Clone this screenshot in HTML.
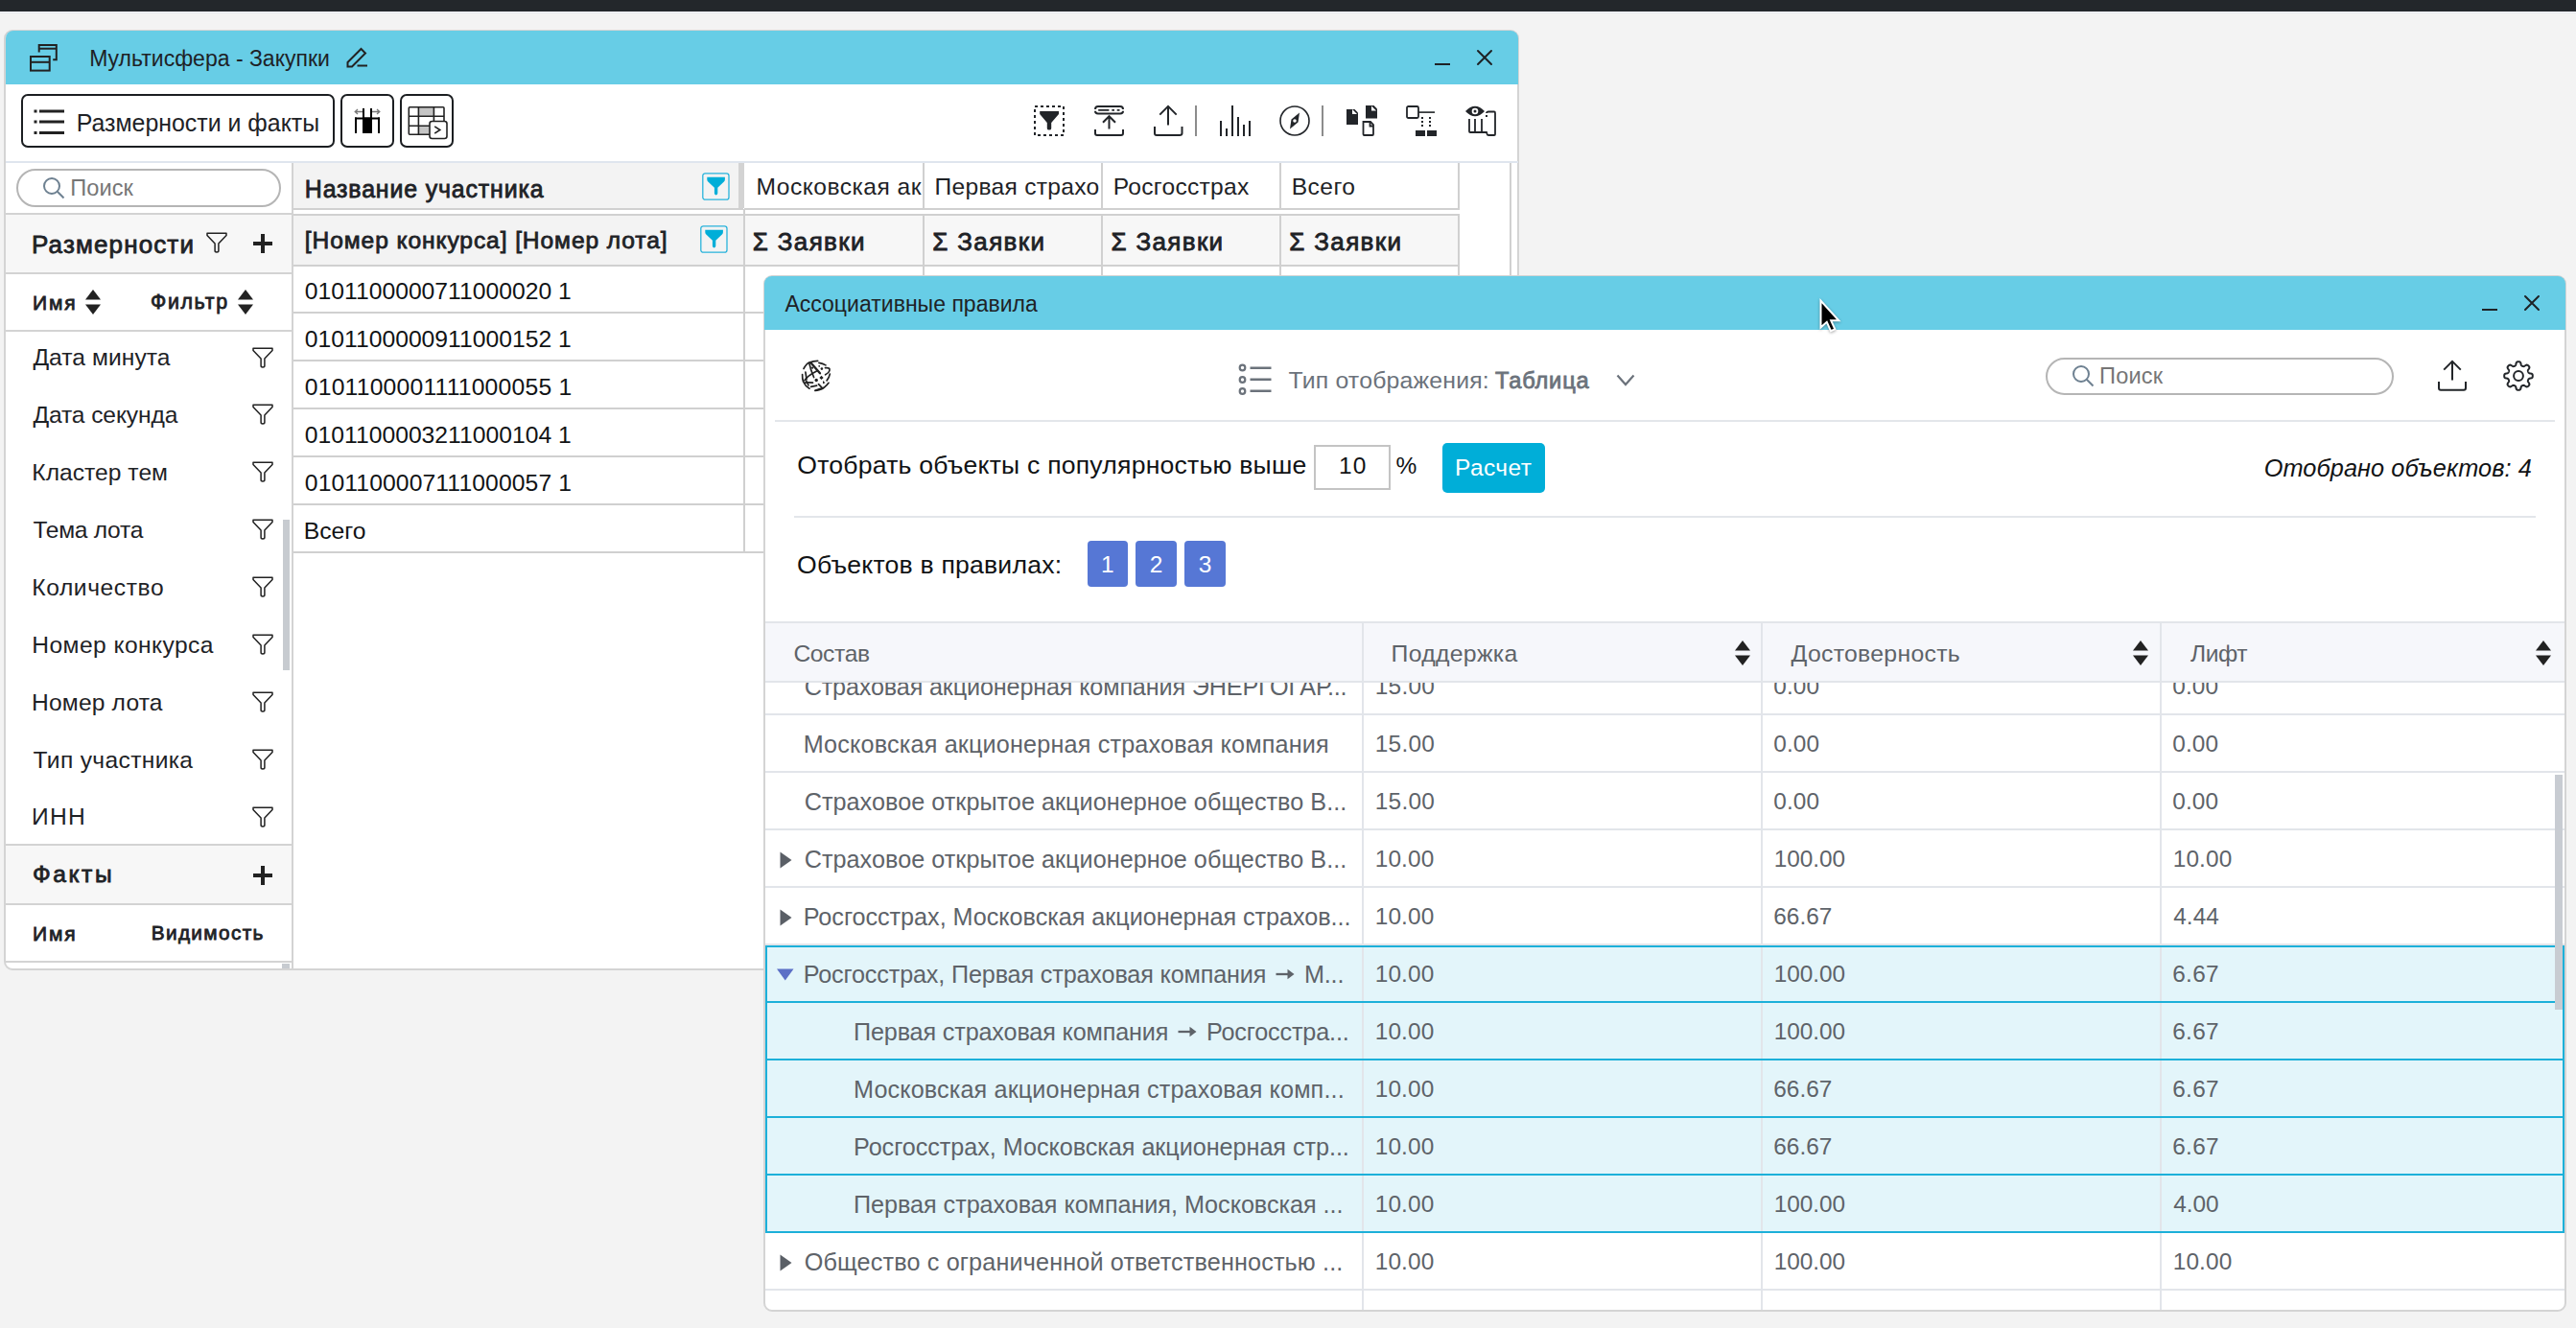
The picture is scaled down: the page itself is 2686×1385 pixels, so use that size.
<!DOCTYPE html><html><head><meta charset="utf-8"><style>
html,body{margin:0;padding:0;width:2686px;height:1385px;overflow:hidden;background:#f3f3f3;}
body{position:relative;font-family:"Liberation Sans",sans-serif;}
.t{position:absolute;white-space:nowrap;line-height:1;}
.r{position:absolute;box-sizing:border-box;}
svg.r{overflow:visible;}
.ar{display:inline-block;transform:translateY(-3px) scale(1.4,1.25);}
</style></head><body>
<div class="r" style="left:0.0px;top:0.0px;width:2686.0px;height:12.0px;background:#23272b;"></div>
<div class="r" style="left:0.0px;top:12.0px;width:2686.0px;height:1.0px;background:#f6f7fb;"></div>
<div class="r" style="left:0.0px;top:13.0px;width:2686.0px;height:1.0px;background:#e7e9ed;"></div>
<div class="r" style="left:4.0px;top:31.0px;width:1580.0px;height:981.0px;background:#ffffff;border:2px solid #d4d4d4;border-radius:9px;"></div>
<div class="r" style="left:6.0px;top:32.0px;width:1577.0px;height:56.0px;background:#67cde6;border-radius:8px 8px 0 0;"></div>
<svg class="r" style="left:30px;top:45px;" width="32" height="32" viewBox="0 0 32 32"><g fill="none" stroke="#222" stroke-width="2"><path d="M10.7 9.6 V2 H28.8 V17.3 H25.2"/><path d="M10.7 5.7 H28.8"/><rect x="2" y="14" width="19.7" height="14.6"/><path d="M2 19.8 H21.7"/></g></svg>
<div class="t" style="left:93.2px;top:49.7px;font-size:23px;font-weight:400;font-style:normal;color:#1e2226;letter-spacing:0.01px;">Мультисфера - Закупки</div>
<svg class="r" style="left:360px;top:49px;" width="26" height="24" viewBox="0 0 26 24"><g fill="none" stroke="#222" stroke-width="2"><path d="M2.5 20.5 V16 L16.5 2 L21 6.5 L7 20.5 Z"/><path d="M12.5 19.5 H23"/></g></svg>
<div class="r" style="left:1496.0px;top:66.0px;width:16.0px;height:2.0px;background:#1e2226;"></div>
<svg class="r" style="left:1540px;top:52px;" width="16" height="16" viewBox="0 0 16 16"><g stroke="#1e2226" stroke-width="2" stroke-linecap="round"><path d="M1 1 L15 15 M15 1 L1 15"/></g></svg>
<div class="r" style="left:6.0px;top:168.0px;width:1577.0px;height:2.0px;background:#dfe5ee;"></div>
<div class="r" style="left:22.0px;top:98.0px;width:327.0px;height:56.0px;background:#fff;border:2px solid #1b1e21;border-radius:7px;"></div>
<svg class="r" style="left:35px;top:114px;" width="34" height="28" viewBox="0 0 34 28"><g fill="#222"><rect x="0.5" y="0.5" width="3" height="3"/><rect x="6" y="0.5" width="26" height="3"/><rect x="0.5" y="11.5" width="3" height="3"/><rect x="6" y="11.5" width="26" height="3"/><rect x="0.5" y="23" width="3" height="3"/><rect x="6" y="23" width="26" height="3"/></g></svg>
<div class="t" style="left:79.7px;top:116.0px;font-size:24.9px;font-weight:400;font-style:normal;color:#1e2226;letter-spacing:0.00px;">Размерности и факты</div>
<div class="r" style="left:355.0px;top:98.0px;width:56.0px;height:56.0px;background:#fff;border:2px solid #1b1e21;border-radius:7px;"></div>
<svg class="r" style="left:369px;top:112px;" width="28" height="28" viewBox="0 0 28 28"><g fill="#000"><rect x="1" y="10.5" width="26" height="2"/><rect x="1" y="10.5" width="2" height="16.5"/><rect x="25" y="10.5" width="2" height="16.5"/><rect x="9" y="10.5" width="10" height="16.5"/><rect x="9" y="1" width="2" height="10"/><rect x="17" y="1" width="2" height="10"/></g><g fill="none" stroke="#777" stroke-width="1.3"><path d="M9 4.5 H1.5 M4 2 L1.2 4.5 L4 7 M19 4.5 H26.5 M24 2 L26.8 4.5 L24 7"/></g></svg>
<div class="r" style="left:417.0px;top:98.0px;width:56.0px;height:56.0px;background:#fff;border:2px solid #1b1e21;border-radius:7px;"></div>
<svg class="r" style="left:425px;top:110px;" width="44" height="38" viewBox="0 0 44 38"><g fill="#c4c4c4"><rect x="11.4" y="1.8" width="16" height="9.5"/><rect x="11.4" y="21.2" width="11.6" height="9"/></g><g fill="none" stroke="#222" stroke-width="1.6"><rect x="1.3" y="1.8" width="36.7" height="28.4" rx="1"/><path d="M1.3 11.3 H38 M1.3 21.2 H23 M11.4 1.8 V30.2 M27.4 1.8 V16.5"/></g><rect x="23" y="16.5" width="18" height="18" rx="2.5" fill="#fff" stroke="#222" stroke-width="1.6"/><path d="M28.2 21.8 L33.8 25.5 L28.2 29.2" fill="none" stroke="#222" stroke-width="1.6"/></svg>
<svg class="r" style="left:1078px;top:110px;" width="32" height="32" viewBox="0 0 32 32"><rect x="1" y="1" width="30" height="30" fill="none" stroke="#222529" stroke-width="2" stroke-dasharray="3 3"/><path d="M6.2 6 H26 V9 L18.2 18 V24 Q18.2 25.6 16 25.6 Q13.8 25.6 13.8 24 V18 L6.2 9 Z" fill="#222529"/></svg>
<svg class="r" style="left:1141px;top:110px;" width="31" height="32" viewBox="0 0 31 32"><g fill="none" stroke="#222529" stroke-width="2"><path d="M1 4 Q1 1 4 1 H27 Q30 1 30 4"/><path d="M1 5.8 Q1 8.6 4 8.6 H27 Q30 8.6 30 5.8"/><path d="M4.2 4.8 H15.4 M18.3 4.8 H21 M23.7 4.8 H26.5" stroke-width="1.7"/><path d="M15.5 24.5 V11.5 M9 17.7 L15.5 11.2 L22 17.7"/><path d="M1 25 V29 Q1 31 3 31 H28 Q30 31 30 29 V25"/></g></svg>
<svg class="r" style="left:1203px;top:110px;" width="31" height="32" viewBox="0 0 31 32"><g fill="none" stroke="#222529" stroke-width="2"><path d="M15 20.6 V1.5 M6.3 9.6 L15 0.9 L23.7 9.6"/><path d="M1 22 V29 Q1 31 3 31 H27 Q29.5 31 29.5 29 V22"/></g></svg>
<div class="r" style="left:1246.2px;top:110.0px;width:1.8px;height:32.0px;background:#8c8c8c;"></div>
<svg class="r" style="left:1272px;top:110px;" width="32" height="32" viewBox="0 0 32 32"><g fill="#222529"><rect x="0" y="16" width="2" height="16"/><rect x="6" y="24" width="2" height="8"/><rect x="12" y="0" width="2" height="32"/><rect x="18" y="12" width="2" height="20"/><rect x="24" y="20" width="2" height="12"/><rect x="30" y="16" width="2" height="16"/></g></svg>
<svg class="r" style="left:1334px;top:110px;" width="32" height="32" viewBox="0 0 32 32"><circle cx="16" cy="16" r="15" fill="none" stroke="#222529" stroke-width="1.6"/><path d="M21 7.5 L19.5 17.5 L11 24.5 L12.5 14.5 Z" fill="#222529"/><circle cx="16" cy="16" r="1.8" fill="#fff"/></svg>
<div class="r" style="left:1378.0px;top:110.0px;width:1.8px;height:32.0px;background:#8c8c8c;"></div>
<svg class="r" style="left:1404px;top:110px;" width="33" height="32" viewBox="0 0 33 32"><path d="M0 4 H8.5 L12 7.5 V20 H0 Z" fill="#222529"/><path d="M6 4 V9 H11" fill="#fff"/><path d="M20 0 H28.5 L32 3.5 V13.5 H20 Z" fill="#222529"/><path d="M26 0.5 V5.5 H31" fill="#fff"/><path d="M17.5 17 H25 L28 20 V30 Q28 31 27 31 H18.5 Q17.5 31 17.5 30 Z" fill="none" stroke="#222529" stroke-width="1.8"/><path d="M24.5 17 V21.5 H28" fill="none" stroke="#222529" stroke-width="1.8"/></svg>
<svg class="r" style="left:1466px;top:110px;" width="33" height="32" viewBox="0 0 33 32"><rect x="1" y="1" width="12" height="12" rx="1.5" fill="none" stroke="#222529" stroke-width="1.8"/><rect x="13" y="6.3" width="17" height="1.6" fill="#222529"/><g fill="#222529"><rect x="16" y="12" width="2" height="2"/><rect x="16" y="16" width="2" height="2"/><rect x="16" y="20" width="2" height="2"/><rect x="24" y="12" width="2" height="2"/><rect x="24" y="16" width="2" height="2"/><rect x="24" y="20" width="2" height="2"/><rect x="10" y="26" width="10" height="6"/><rect x="22" y="26" width="10" height="6"/></g></svg>
<svg class="r" style="left:1528px;top:110px;" width="33" height="32" viewBox="0 0 33 32"><path d="M0 6 Q10 -4.5 20 6 Q10 16.5 0 6 Z" fill="#222529"/><circle cx="10" cy="6" r="3.3" fill="#fff"/><circle cx="10" cy="6" r="1.5" fill="#222529"/><g fill="none" stroke="#222529" stroke-width="1.8"><path d="M22 8 Q22 6.5 24 6.5 H30 Q31 6.5 31 8 V30 Q31 31 30 31 H24 Q22.5 31 22.5 29.5 L22 28 H5 Q4 28 4 27 V14"/><path d="M10 14 V28 M17 14 V28"/></g><rect x="21" y="10" width="2" height="2" fill="#222529"/></svg>
<div class="r" style="left:304.0px;top:170.0px;width:2.0px;height:840.0px;background:#d3d3d3;"></div>
<div class="r" style="left:16.5px;top:176.0px;width:276.5px;height:39.5px;background:#fff;border:2px solid #b5b5b5;border-radius:20px;"></div>
<svg class="r" style="left:44px;top:184px;" width="24" height="24" viewBox="0 0 24 24"><g fill="none" stroke="#6e8191" stroke-width="2"><circle cx="10" cy="10" r="8"/><path d="M15.8 15.8 L22.5 22.5"/></g></svg>
<div class="t" style="left:73.3px;top:185.0px;font-size:23.6px;font-weight:400;font-style:normal;color:#767676;letter-spacing:0.05px;">Поиск</div>
<div class="r" style="left:6.0px;top:221.5px;width:298.0px;height:2.0px;background:#d3d3d3;"></div>
<div class="r" style="left:6.0px;top:223.5px;width:298.0px;height:60.5px;background:#f7f7f7;"></div>
<div class="t" style="left:33.0px;top:241.6px;font-size:26px;font-weight:400;-webkit-text-stroke:0.8px #1e2226;font-style:normal;color:#1e2226;letter-spacing:1.13px;">Размерности</div>
<svg class="r" style="left:214.5px;top:242px;" width="22" height="22" viewBox="0 0 22 22"><path d="M1 1.2 H21 V3.4 L12.9 12 V19.6 Q12.9 21.1 11 21.1 Q9.1 21.1 9.1 19.6 V12 L1 3.4 Z" fill="none" stroke="#222" stroke-width="1.5" stroke-linejoin="round"/></svg>
<svg class="r" style="left:264px;top:244px;" width="20" height="20" viewBox="0 0 20 20"><g fill="#222"><rect x="8" y="0" width="4" height="20"/><rect x="0" y="8" width="20" height="4"/></g></svg>
<div class="r" style="left:6.0px;top:284.0px;width:298.0px;height:2.0px;background:#d3d3d3;"></div>
<div class="t" style="left:34.0px;top:305.2px;font-size:21px;font-weight:400;-webkit-text-stroke:0.8px #1e2226;font-style:normal;color:#1e2226;letter-spacing:1.80px;">Имя</div>
<div class="t" style="left:157.0px;top:304.9px;font-size:21.4px;font-weight:400;-webkit-text-stroke:0.8px #1e2226;font-style:normal;color:#1e2226;letter-spacing:1.64px;">Фильтр</div>
<svg class="r" style="left:89px;top:302px;" width="16" height="26" viewBox="0 0 16 26"><g fill="#222"><path d="M8 0 L16 10.5 H0 Z"/><path d="M0 15.5 H16 L8 26 Z"/></g></svg>
<svg class="r" style="left:248px;top:302px;" width="16" height="26" viewBox="0 0 16 26"><g fill="#222"><path d="M8 0 L16 10.5 H0 Z"/><path d="M0 15.5 H16 L8 26 Z"/></g></svg>
<div class="r" style="left:6.0px;top:344.0px;width:298.0px;height:2.0px;background:#d3d3d3;"></div>
<div class="t" style="left:34.4px;top:361.2px;font-size:24.6px;font-weight:400;font-style:normal;color:#1e2226;letter-spacing:0.06px;">Дата минута</div>
<svg class="r" style="left:263px;top:361.5px;" width="22" height="22" viewBox="0 0 22 22"><path d="M1 1.2 H21 V3.4 L12.9 12 V19.6 Q12.9 21.1 11 21.1 Q9.1 21.1 9.1 19.6 V12 L1 3.4 Z" fill="none" stroke="#222" stroke-width="1.5" stroke-linejoin="round"/></svg>
<div class="t" style="left:34.4px;top:421.1px;font-size:24.6px;font-weight:400;font-style:normal;color:#1e2226;letter-spacing:-0.11px;">Дата секунда</div>
<svg class="r" style="left:263px;top:421.4px;" width="22" height="22" viewBox="0 0 22 22"><path d="M1 1.2 H21 V3.4 L12.9 12 V19.6 Q12.9 21.1 11 21.1 Q9.1 21.1 9.1 19.6 V12 L1 3.4 Z" fill="none" stroke="#222" stroke-width="1.5" stroke-linejoin="round"/></svg>
<div class="t" style="left:33.3px;top:481.0px;font-size:24.6px;font-weight:400;font-style:normal;color:#1e2226;letter-spacing:0.03px;">Кластер тем</div>
<svg class="r" style="left:263px;top:481.3px;" width="22" height="22" viewBox="0 0 22 22"><path d="M1 1.2 H21 V3.4 L12.9 12 V19.6 Q12.9 21.1 11 21.1 Q9.1 21.1 9.1 19.6 V12 L1 3.4 Z" fill="none" stroke="#222" stroke-width="1.5" stroke-linejoin="round"/></svg>
<div class="t" style="left:34.4px;top:540.9px;font-size:24.6px;font-weight:400;font-style:normal;color:#1e2226;letter-spacing:-0.28px;">Тема лота</div>
<svg class="r" style="left:263px;top:541.2px;" width="22" height="22" viewBox="0 0 22 22"><path d="M1 1.2 H21 V3.4 L12.9 12 V19.6 Q12.9 21.1 11 21.1 Q9.1 21.1 9.1 19.6 V12 L1 3.4 Z" fill="none" stroke="#222" stroke-width="1.5" stroke-linejoin="round"/></svg>
<div class="t" style="left:33.3px;top:600.8px;font-size:24.6px;font-weight:400;font-style:normal;color:#1e2226;letter-spacing:0.58px;">Количество</div>
<svg class="r" style="left:263px;top:601.1px;" width="22" height="22" viewBox="0 0 22 22"><path d="M1 1.2 H21 V3.4 L12.9 12 V19.6 Q12.9 21.1 11 21.1 Q9.1 21.1 9.1 19.6 V12 L1 3.4 Z" fill="none" stroke="#222" stroke-width="1.5" stroke-linejoin="round"/></svg>
<div class="t" style="left:33.3px;top:660.7px;font-size:24.6px;font-weight:400;font-style:normal;color:#1e2226;letter-spacing:0.43px;">Номер конкурса</div>
<svg class="r" style="left:263px;top:661.0px;" width="22" height="22" viewBox="0 0 22 22"><path d="M1 1.2 H21 V3.4 L12.9 12 V19.6 Q12.9 21.1 11 21.1 Q9.1 21.1 9.1 19.6 V12 L1 3.4 Z" fill="none" stroke="#222" stroke-width="1.5" stroke-linejoin="round"/></svg>
<div class="t" style="left:33.1px;top:720.6px;font-size:24.6px;font-weight:400;font-style:normal;color:#1e2226;letter-spacing:0.16px;">Номер лота</div>
<svg class="r" style="left:263px;top:720.9px;" width="22" height="22" viewBox="0 0 22 22"><path d="M1 1.2 H21 V3.4 L12.9 12 V19.6 Q12.9 21.1 11 21.1 Q9.1 21.1 9.1 19.6 V12 L1 3.4 Z" fill="none" stroke="#222" stroke-width="1.5" stroke-linejoin="round"/></svg>
<div class="t" style="left:34.6px;top:780.5px;font-size:24.6px;font-weight:400;font-style:normal;color:#1e2226;letter-spacing:0.33px;">Тип участника</div>
<svg class="r" style="left:263px;top:780.8px;" width="22" height="22" viewBox="0 0 22 22"><path d="M1 1.2 H21 V3.4 L12.9 12 V19.6 Q12.9 21.1 11 21.1 Q9.1 21.1 9.1 19.6 V12 L1 3.4 Z" fill="none" stroke="#222" stroke-width="1.5" stroke-linejoin="round"/></svg>
<div class="t" style="left:33.1px;top:840.4px;font-size:24.6px;font-weight:400;font-style:normal;color:#1e2226;letter-spacing:1.20px;">ИНН</div>
<svg class="r" style="left:263px;top:840.7px;" width="22" height="22" viewBox="0 0 22 22"><path d="M1 1.2 H21 V3.4 L12.9 12 V19.6 Q12.9 21.1 11 21.1 Q9.1 21.1 9.1 19.6 V12 L1 3.4 Z" fill="none" stroke="#222" stroke-width="1.5" stroke-linejoin="round"/></svg>
<div class="r" style="left:294.5px;top:542.0px;width:7.5px;height:157.0px;background:#c7cbd0;"></div>
<div class="r" style="left:6.0px;top:880.0px;width:298.0px;height:2.0px;background:#d3d3d3;"></div>
<div class="r" style="left:6.0px;top:882.0px;width:298.0px;height:60.0px;background:#f7f7f7;"></div>
<div class="t" style="left:34.0px;top:899.9px;font-size:24.6px;font-weight:400;-webkit-text-stroke:0.8px #1e2226;font-style:normal;color:#1e2226;letter-spacing:2.55px;">Факты</div>
<svg class="r" style="left:264px;top:902.5px;" width="20" height="20" viewBox="0 0 20 20"><g fill="#222"><rect x="8" y="0" width="4" height="20"/><rect x="0" y="8" width="20" height="4"/></g></svg>
<div class="r" style="left:6.0px;top:941.5px;width:298.0px;height:2.0px;background:#d3d3d3;"></div>
<div class="t" style="left:34.0px;top:963.2px;font-size:21px;font-weight:400;-webkit-text-stroke:0.8px #1e2226;font-style:normal;color:#1e2226;letter-spacing:1.80px;">Имя</div>
<div class="t" style="left:157.7px;top:963.4px;font-size:20.8px;font-weight:400;-webkit-text-stroke:0.8px #1e2226;font-style:normal;color:#1e2226;letter-spacing:1.35px;">Видимость</div>
<div class="r" style="left:6.0px;top:1002.0px;width:298.0px;height:2.0px;background:#d3d3d3;"></div>
<div class="r" style="left:294.0px;top:1005.0px;width:8.0px;height:5.0px;background:#c7cbd0;"></div>
<div class="r" style="left:306.0px;top:170.0px;width:466.0px;height:47.0px;background:#f3f3f3;"></div>
<div class="r" style="left:306.0px;top:217.0px;width:469.0px;height:2.0px;background:#d0d0d0;"></div>
<div class="r" style="left:770.0px;top:170.0px;width:6.0px;height:47.0px;background:#d3d3d3;"></div>
<div class="t" style="left:317.8px;top:184.5px;font-size:24.9px;font-weight:400;-webkit-text-stroke:0.8px #1e2226;font-style:normal;color:#1e2226;letter-spacing:0.86px;">Название участника</div>
<svg class="r" style="left:731.5px;top:179.5px;" width="29" height="29" viewBox="0 0 29 29"><rect x="0.8" y="0.8" width="27.2" height="27.4" rx="2.5" fill="none" stroke="#29b3db" stroke-width="1.3"/><path d="M5.3 4.8 H23.9 V7.3 Q23.9 8.6 22.9 9.6 L16.3 15.8 V21.6 Q16.3 23.4 14.6 23.4 Q12.9 23.4 12.9 21.6 V15.8 L6.3 9.6 Q5.3 8.6 5.3 7.3 Z" fill="#00aed8"/></svg>
<div class="r" style="left:306.0px;top:223.0px;width:469.0px;height:2.0px;background:#d0d0d0;"></div>
<div class="r" style="left:306.0px;top:225.0px;width:469.0px;height:50.5px;background:#f3f3f3;"></div>
<div class="r" style="left:306.0px;top:275.5px;width:469.0px;height:2.0px;background:#d0d0d0;"></div>
<div class="t" style="left:317.8px;top:239.2px;font-size:24.6px;font-weight:400;-webkit-text-stroke:0.8px #1e2226;font-style:normal;color:#1e2226;letter-spacing:0.90px;">[Номер конкурса] [Номер лота]</div>
<svg class="r" style="left:729.5px;top:234.5px;" width="29" height="29" viewBox="0 0 29 29"><rect x="0.8" y="0.8" width="27.2" height="27.4" rx="2.5" fill="none" stroke="#29b3db" stroke-width="1.3"/><path d="M5.3 4.8 H23.9 V7.3 Q23.9 8.6 22.9 9.6 L16.3 15.8 V21.6 Q16.3 23.4 14.6 23.4 Q12.9 23.4 12.9 21.6 V15.8 L6.3 9.6 Q5.3 8.6 5.3 7.3 Z" fill="#00aed8"/></svg>
<div class="r" style="left:775.5px;top:217.0px;width:746.5px;height:2.0px;background:#d0d0d0;"></div>
<div class="r" style="left:775.5px;top:223.0px;width:746.5px;height:2.0px;background:#d0d0d0;"></div>
<div class="r" style="left:775.5px;top:225.0px;width:746.5px;height:50.5px;background:#f7f7f7;"></div>
<div class="r" style="left:775.5px;top:275.5px;width:746.5px;height:2.0px;background:#d0d0d0;"></div>
<div class="t" style="left:788.6px;top:183.2px;font-size:24.6px;font-weight:400;font-style:normal;color:#1e2226;letter-spacing:0.48px;">Московская ак</div>
<div class="t" style="left:784.8px;top:238.5px;font-size:26px;font-weight:400;-webkit-text-stroke:0.8px #1e2226;font-style:normal;color:#1e2226;letter-spacing:1.34px;"><span style="font-weight:400">Σ</span> Заявки</div>
<div class="t" style="left:974.5px;top:183.2px;font-size:24.6px;font-weight:400;font-style:normal;color:#1e2226;letter-spacing:0.29px;">Первая страхо</div>
<div class="t" style="left:972.3px;top:238.5px;font-size:26px;font-weight:400;-webkit-text-stroke:0.8px #1e2226;font-style:normal;color:#1e2226;letter-spacing:1.34px;"><span style="font-weight:400">Σ</span> Заявки</div>
<div class="t" style="left:1160.8px;top:183.2px;font-size:24.6px;font-weight:400;font-style:normal;color:#1e2226;letter-spacing:0.25px;">Росгосстрах</div>
<div class="t" style="left:1158.5px;top:238.5px;font-size:26px;font-weight:400;-webkit-text-stroke:0.8px #1e2226;font-style:normal;color:#1e2226;letter-spacing:1.34px;"><span style="font-weight:400">Σ</span> Заявки</div>
<div class="t" style="left:1346.7px;top:183.2px;font-size:24.6px;font-weight:400;font-style:normal;color:#1e2226;letter-spacing:0.45px;">Всего</div>
<div class="t" style="left:1344.3px;top:238.5px;font-size:26px;font-weight:400;-webkit-text-stroke:0.8px #1e2226;font-style:normal;color:#1e2226;letter-spacing:1.34px;"><span style="font-weight:400">Σ</span> Заявки</div>
<div class="r" style="left:962.0px;top:170.0px;width:2.0px;height:47.0px;background:#d0d0d0;"></div>
<div class="r" style="left:962.0px;top:223.0px;width:2.0px;height:65.0px;background:#d0d0d0;"></div>
<div class="r" style="left:1148.2px;top:170.0px;width:2.0px;height:47.0px;background:#d0d0d0;"></div>
<div class="r" style="left:1148.2px;top:223.0px;width:2.0px;height:65.0px;background:#d0d0d0;"></div>
<div class="r" style="left:1334.0px;top:170.0px;width:2.0px;height:47.0px;background:#d0d0d0;"></div>
<div class="r" style="left:1334.0px;top:223.0px;width:2.0px;height:65.0px;background:#d0d0d0;"></div>
<div class="r" style="left:1520.0px;top:170.0px;width:2.0px;height:47.0px;background:#d0d0d0;"></div>
<div class="r" style="left:1520.0px;top:223.0px;width:2.0px;height:65.0px;background:#d0d0d0;"></div>
<div class="r" style="left:1574.0px;top:170.0px;width:2.0px;height:840.0px;background:#d0d0d0;"></div>
<div class="t" style="left:317.8px;top:292.1px;font-size:24.7px;font-weight:400;font-style:normal;color:#111315;letter-spacing:0.01px;">0101100000711000020 1</div>
<div class="r" style="left:306.0px;top:325.0px;width:491.0px;height:2.0px;background:#d0d0d0;"></div>
<div class="t" style="left:317.8px;top:342.0px;font-size:24.7px;font-weight:400;font-style:normal;color:#111315;letter-spacing:0.01px;">0101100000911000152 1</div>
<div class="r" style="left:306.0px;top:375.0px;width:491.0px;height:2.0px;background:#d0d0d0;"></div>
<div class="t" style="left:317.8px;top:391.9px;font-size:24.7px;font-weight:400;font-style:normal;color:#111315;letter-spacing:0.21px;">0101100001111000055 1</div>
<div class="r" style="left:306.0px;top:425.0px;width:491.0px;height:2.0px;background:#d0d0d0;"></div>
<div class="t" style="left:317.8px;top:441.8px;font-size:24.7px;font-weight:400;font-style:normal;color:#111315;letter-spacing:0.01px;">0101100003211000104 1</div>
<div class="r" style="left:306.0px;top:475.0px;width:491.0px;height:2.0px;background:#d0d0d0;"></div>
<div class="t" style="left:317.8px;top:491.7px;font-size:24.7px;font-weight:400;font-style:normal;color:#111315;letter-spacing:0.11px;">0101100007111000057 1</div>
<div class="r" style="left:306.0px;top:525.0px;width:491.0px;height:2.0px;background:#d0d0d0;"></div>
<div class="t" style="left:316.8px;top:541.6px;font-size:24.7px;font-weight:400;font-style:normal;color:#111315;letter-spacing:0.00px;">Всего</div>
<div class="r" style="left:306.0px;top:575.0px;width:491.0px;height:2.0px;background:#d0d0d0;"></div>
<div class="r" style="left:774.5px;top:218.0px;width:2.0px;height:358.0px;background:#d0d0d0;"></div>
<div class="r" style="left:796.0px;top:287.0px;width:1880.0px;height:1081.0px;background:#fff;border:2px solid #d4d4d4;border-radius:9px;"></div>
<div class="r" style="left:797.0px;top:288.0px;width:1878.0px;height:56.0px;background:#67cde6;border-radius:8px 8px 0 0;"></div>
<div class="t" style="left:818.4px;top:305.5px;font-size:23px;font-weight:400;font-style:normal;color:#1e2226;letter-spacing:0.02px;">Ассоциативные правила</div>
<div class="r" style="left:2588.0px;top:322.0px;width:16.0px;height:2.0px;background:#1e2226;"></div>
<svg class="r" style="left:2632px;top:308px;" width="16" height="16" viewBox="0 0 16 16"><g stroke="#1e2226" stroke-width="2" stroke-linecap="round"><path d="M1 1 L15 15 M15 1 L1 15"/></g></svg>
<svg class="r" style="left:836px;top:376px;" width="31" height="32" viewBox="0 0 31 32"><g fill="none" stroke="#222" stroke-width="1.7" stroke-linecap="round">
<path d="M2 8.5 Q5 3 8 2 Q12 0.3 16.7 0.3"/>
<path d="M17.9 2.4 Q22 3 25 4.9"/>
<path d="M24.5 7.7 Q28.5 7.3 29 9 Q29.5 12 24.6 14.8"/>
<path d="M29.3 14.1 Q28.5 18 26.1 20.9"/>
<path d="M28 23.3 Q24 29 18 30.8 Q16 31.4 14.1 31.4"/>
<path d="M0.6 14.5 Q0.5 19 1.5 22 Q3.5 26.5 8 29.2"/>
<path d="M7.7 2.4 Q9 9 12.6 17.5"/>
<path d="M9.6 2.4 L19 13.3" stroke-width="2.3"/>
<path d="M2.8 20.9 Q6 16 15.6 11.1"/>
<path d="M3.2 23.1 Q7 22.6 11.5 23.1"/>
<path d="M3.9 12.2 L5 19.4"/>
<path d="M4.7 21 L7 25.8"/>
<path d="M9.6 27.3 L15.6 26.1"/>
<path d="M17.5 24.6 L21.6 28.8"/>
<path d="M14 31.2 Q18 29.5 21.6 28.8"/>
</g><g fill="#222"><circle cx="18.2" cy="5.8" r="0.9"/><circle cx="20.9" cy="8.6" r="1.3"/><circle cx="11.1" cy="7.7" r="1.1"/><circle cx="15.2" cy="20.5" r="1.7"/><rect x="19" y="16.4" width="3" height="3" transform="rotate(45 20.5 17.9)"/><path d="M22 21 L24.5 23.2 L22 24.3 Z"/></g></svg>
<svg class="r" style="left:1291px;top:379px;" width="36" height="34" viewBox="0 0 36 34"><g fill="none" stroke="#6b727b" stroke-width="2.2"><circle cx="4.5" cy="4.5" r="2.8"/><circle cx="4.5" cy="17" r="2.8"/><circle cx="4.5" cy="29" r="2.8"/></g><g fill="#6b727b"><rect x="12.5" y="3.5" width="22" height="2.5"/><rect x="12.5" y="15.5" width="22" height="2.5"/><rect x="12.5" y="27.5" width="22" height="2.5"/></g></svg>
<div class="t" style="left:1343.4px;top:384.6px;font-size:24.8px;font-weight:400;font-style:normal;color:#6b727b;letter-spacing:0.20px;">Тип отображения:</div>
<div class="t" style="left:1559.0px;top:385.5px;font-size:23.7px;font-weight:400;-webkit-text-stroke:0.8px #6b727b;font-style:normal;color:#6b727b;letter-spacing:0.80px;">Таблица</div>
<svg class="r" style="left:1685px;top:390px;" width="20" height="13" viewBox="0 0 20 13"><path d="M1.5 1.5 L10 11 L18.5 1.5" fill="none" stroke="#6b727b" stroke-width="2.2"/></svg>
<div class="r" style="left:2132.5px;top:372.5px;width:363.0px;height:39.0px;background:#fff;border:2px solid #b5b5b5;border-radius:20px;"></div>
<svg class="r" style="left:2160px;top:380px;" width="24" height="24" viewBox="0 0 24 24"><g fill="none" stroke="#6e8191" stroke-width="2"><circle cx="10" cy="10" r="8"/><path d="M15.8 15.8 L22.5 22.5"/></g></svg>
<div class="t" style="left:2189.0px;top:381.0px;font-size:23.6px;font-weight:400;font-style:normal;color:#767676;letter-spacing:0.17px;">Поиск</div>
<svg class="r" style="left:2542px;top:376px;" width="31" height="33" viewBox="0 0 31 33"><g fill="none" stroke="#222529" stroke-width="2"><path d="M15 20.6 V1.2 M6.2 9.6 L15 0.9 L23.8 9.6"/><path d="M1 22 V28.7 Q1 30.7 3 30.7 H27 Q29 30.7 29 28.7 V22"/></g></svg>
<svg class="r" style="left:2610px;top:376px;" width="32" height="32" viewBox="0 0 32 32"><path d="M30.80 16.00 L30.79 16.39 L30.75 16.77 L30.68 17.16 L30.54 17.53 L30.28 17.88 L29.81 18.19 L29.08 18.42 L28.22 18.60 L27.49 18.76 L27.01 18.95 L26.72 19.18 L26.54 19.42 L26.40 19.68 L26.28 19.94 L26.16 20.21 L26.05 20.48 L25.95 20.75 L25.87 21.03 L25.83 21.34 L25.87 21.70 L26.08 22.17 L26.48 22.80 L26.97 23.54 L27.31 24.22 L27.43 24.77 L27.36 25.20 L27.19 25.56 L26.98 25.88 L26.73 26.18 L26.47 26.47 L26.18 26.73 L25.88 26.98 L25.56 27.19 L25.20 27.36 L24.77 27.43 L24.22 27.31 L23.54 26.97 L22.80 26.48 L22.17 26.08 L21.70 25.87 L21.34 25.83 L21.03 25.87 L20.75 25.95 L20.48 26.05 L20.21 26.16 L19.94 26.28 L19.68 26.40 L19.42 26.54 L19.18 26.72 L18.95 27.01 L18.76 27.49 L18.60 28.22 L18.42 29.08 L18.19 29.81 L17.88 30.28 L17.53 30.54 L17.16 30.68 L16.77 30.75 L16.39 30.79 L16.00 30.80 L15.61 30.79 L15.23 30.75 L14.84 30.68 L14.47 30.54 L14.12 30.28 L13.81 29.81 L13.58 29.08 L13.40 28.22 L13.24 27.49 L13.05 27.01 L12.82 26.72 L12.58 26.54 L12.32 26.40 L12.06 26.28 L11.79 26.16 L11.52 26.05 L11.25 25.95 L10.97 25.87 L10.66 25.83 L10.30 25.87 L9.83 26.08 L9.20 26.48 L8.46 26.97 L7.78 27.31 L7.23 27.43 L6.80 27.36 L6.44 27.19 L6.12 26.98 L5.82 26.73 L5.53 26.47 L5.27 26.18 L5.02 25.88 L4.81 25.56 L4.64 25.20 L4.57 24.77 L4.69 24.22 L5.03 23.54 L5.52 22.80 L5.92 22.17 L6.13 21.70 L6.17 21.34 L6.13 21.03 L6.05 20.75 L5.95 20.48 L5.84 20.21 L5.72 19.94 L5.60 19.68 L5.46 19.42 L5.28 19.18 L4.99 18.95 L4.51 18.76 L3.78 18.60 L2.92 18.42 L2.19 18.19 L1.72 17.88 L1.46 17.53 L1.32 17.16 L1.25 16.77 L1.21 16.39 L1.20 16.00 L1.21 15.61 L1.25 15.23 L1.32 14.84 L1.46 14.47 L1.72 14.12 L2.19 13.81 L2.92 13.58 L3.78 13.40 L4.51 13.24 L4.99 13.05 L5.28 12.82 L5.46 12.58 L5.60 12.32 L5.72 12.06 L5.84 11.79 L5.95 11.52 L6.05 11.25 L6.13 10.97 L6.17 10.66 L6.13 10.30 L5.92 9.83 L5.52 9.20 L5.03 8.46 L4.69 7.78 L4.57 7.23 L4.64 6.80 L4.81 6.44 L5.02 6.12 L5.27 5.82 L5.53 5.53 L5.82 5.27 L6.12 5.02 L6.44 4.81 L6.80 4.64 L7.23 4.57 L7.78 4.69 L8.46 5.03 L9.20 5.52 L9.83 5.92 L10.30 6.13 L10.66 6.17 L10.97 6.13 L11.25 6.05 L11.52 5.95 L11.79 5.84 L12.06 5.72 L12.32 5.60 L12.58 5.46 L12.82 5.28 L13.05 4.99 L13.24 4.51 L13.40 3.78 L13.58 2.92 L13.81 2.19 L14.12 1.72 L14.47 1.46 L14.84 1.32 L15.23 1.25 L15.61 1.21 L16.00 1.20 L16.39 1.21 L16.77 1.25 L17.16 1.32 L17.53 1.46 L17.88 1.72 L18.19 2.19 L18.42 2.92 L18.60 3.78 L18.76 4.51 L18.95 4.99 L19.18 5.28 L19.42 5.46 L19.68 5.60 L19.94 5.72 L20.21 5.84 L20.48 5.95 L20.75 6.05 L21.03 6.13 L21.34 6.17 L21.70 6.13 L22.17 5.92 L22.80 5.52 L23.54 5.03 L24.22 4.69 L24.77 4.57 L25.20 4.64 L25.56 4.81 L25.88 5.02 L26.18 5.27 L26.47 5.53 L26.73 5.82 L26.98 6.12 L27.19 6.44 L27.36 6.80 L27.43 7.23 L27.31 7.78 L26.97 8.46 L26.48 9.20 L26.08 9.83 L25.87 10.30 L25.83 10.66 L25.87 10.97 L25.95 11.25 L26.05 11.52 L26.16 11.79 L26.28 12.06 L26.40 12.32 L26.54 12.58 L26.72 12.82 L27.01 13.05 L27.49 13.24 L28.22 13.40 L29.08 13.58 L29.81 13.81 L30.28 14.12 L30.54 14.47 L30.68 14.84 L30.75 15.23 L30.79 15.61 Z" fill="none" stroke="#222529" stroke-width="2" stroke-linejoin="round"/><circle cx="16" cy="16" r="4.9" fill="none" stroke="#222529" stroke-width="2"/></svg>
<div class="r" style="left:808.0px;top:437.5px;width:1856.0px;height:2.0px;background:#e3e6ea;"></div>
<div class="t" style="left:831.3px;top:471.9px;font-size:26.6px;font-weight:400;font-style:normal;color:#111315;letter-spacing:0.21px;">Отобрать объекты с популярностью выше</div>
<div class="r" style="left:1370.0px;top:464.0px;width:79.5px;height:47.0px;background:#fff;border:2px solid #c4c4c4;"></div>
<div class="t" style="left:1396.0px;top:473.8px;font-size:24.5px;font-weight:400;font-style:normal;color:#111315;letter-spacing:1.00px;">10</div>
<div class="t" style="left:1455.6px;top:473.8px;font-size:24.5px;font-weight:400;font-style:normal;color:#111315;letter-spacing:0.00px;">%</div>
<div class="r" style="left:1504.0px;top:462.0px;width:107.0px;height:51.5px;background:#00aed8;border-radius:5px;"></div>
<div class="t" style="left:1517.0px;top:476.3px;font-size:24.5px;font-weight:400;font-style:normal;color:#ffffff;letter-spacing:0.40px;">Расчет</div>
<div class="t" style="left:2360.7px;top:475.8px;font-size:25.3px;font-weight:400;font-style:italic;color:#111315;letter-spacing:0.08px;">Отобрано объектов: 4</div>
<div class="r" style="left:828.0px;top:537.5px;width:1815.5px;height:2.0px;background:#e3e6ea;"></div>
<div class="t" style="left:831.0px;top:575.9px;font-size:26.6px;font-weight:400;font-style:normal;color:#111315;letter-spacing:0.21px;">Объектов в правилах:</div>
<div class="r" style="left:1134.0px;top:564.0px;width:41.5px;height:47.5px;background:#5677d5;border-radius:4px;"></div>
<div class="t" style="left:1134px;width:41.5px;text-align:center;top:577.0px;font-size:24.5px;color:#fff;">1</div>
<div class="r" style="left:1184.0px;top:564.0px;width:43.0px;height:47.5px;background:#5677d5;border-radius:4px;"></div>
<div class="t" style="left:1184px;width:43px;text-align:center;top:577.0px;font-size:24.5px;color:#fff;">2</div>
<div class="r" style="left:1235.0px;top:564.0px;width:43.0px;height:47.5px;background:#5677d5;border-radius:4px;"></div>
<div class="t" style="left:1235px;width:43px;text-align:center;top:577.0px;font-size:24.5px;color:#fff;">3</div>
<div class="r" style="left:798.0px;top:648.0px;width:1876.0px;height:2.0px;background:#e2e5ea;"></div>
<div class="r" style="left:798.0px;top:650.0px;width:1876.0px;height:60.5px;background:#f6f7fb;"></div>
<div class="r" style="left:798.0px;top:709.5px;width:1876.0px;height:2.0px;background:#e2e5ea;"></div>
<div class="t" style="left:827.4px;top:670.4px;font-size:24.6px;font-weight:400;font-style:normal;color:#5e6369;letter-spacing:-0.36px;">Состав</div>
<div class="t" style="left:1450.5px;top:670.2px;font-size:24.8px;font-weight:400;font-style:normal;color:#5e6369;letter-spacing:0.31px;">Поддержка</div>
<div class="t" style="left:1867.6px;top:670.2px;font-size:24.8px;font-weight:400;font-style:normal;color:#5e6369;letter-spacing:0.28px;">Достоверность</div>
<div class="t" style="left:2284.0px;top:670.4px;font-size:24.6px;font-weight:400;font-style:normal;color:#5e6369;letter-spacing:-0.40px;">Лифт</div>
<div class="r" style="left:1420.0px;top:650.0px;width:2.0px;height:60.0px;background:#e2e5ea;"></div>
<div class="r" style="left:1836.0px;top:650.0px;width:2.0px;height:60.0px;background:#e2e5ea;"></div>
<div class="r" style="left:2252.0px;top:650.0px;width:2.0px;height:60.0px;background:#e2e5ea;"></div>
<svg class="r" style="left:1808.5px;top:668px;" width="16" height="26" viewBox="0 0 16 26"><g fill="#222"><path d="M8 0 L16 10.5 H0 Z"/><path d="M0 15.5 H16 L8 26 Z"/></g></svg>
<svg class="r" style="left:2224px;top:668px;" width="16" height="26" viewBox="0 0 16 26"><g fill="#222"><path d="M8 0 L16 10.5 H0 Z"/><path d="M0 15.5 H16 L8 26 Z"/></g></svg>
<svg class="r" style="left:2644px;top:668px;" width="16" height="26" viewBox="0 0 16 26"><g fill="#222"><path d="M8 0 L16 10.5 H0 Z"/><path d="M0 15.5 H16 L8 26 Z"/></g></svg>
<div class="r" style="left:798px;top:711.5px;width:1876px;height:654px;overflow:hidden;">
<div class="r" style="left:622.0px;top:-26.5px;width:2.0px;height:60.0px;background:#e2e5ea;"></div>
<div class="r" style="left:1038.0px;top:-26.5px;width:2.0px;height:60.0px;background:#e2e5ea;"></div>
<div class="r" style="left:1454.0px;top:-26.5px;width:2.0px;height:60.0px;background:#e2e5ea;"></div>
<div class="t" style="left:40.7px;top:-7.3px;font-size:25.2px;font-weight:400;font-style:normal;color:#5e6369;letter-spacing:-0.15px;">Страховая акционерная компания ЭНЕРГОГАР...</div>
<div class="t" style="left:635.7px;top:-7.2px;font-size:24.4px;font-weight:400;font-style:normal;color:#5e6369;letter-spacing:0.30px;">15.00</div>
<div class="t" style="left:1051.2px;top:-7.2px;font-size:24.4px;font-weight:400;font-style:normal;color:#5e6369;letter-spacing:0.17px;">0.00</div>
<div class="t" style="left:1467.2px;top:-7.2px;font-size:24.4px;font-weight:400;font-style:normal;color:#5e6369;letter-spacing:0.17px;">0.00</div>
<div class="r" style="left:0.0px;top:32.5px;width:1876.0px;height:2.0px;background:#e2e5ea;"></div>
<div class="r" style="left:622.0px;top:33.5px;width:2.0px;height:60.0px;background:#e2e5ea;"></div>
<div class="r" style="left:1038.0px;top:33.5px;width:2.0px;height:60.0px;background:#e2e5ea;"></div>
<div class="r" style="left:1454.0px;top:33.5px;width:2.0px;height:60.0px;background:#e2e5ea;"></div>
<div class="t" style="left:39.7px;top:52.7px;font-size:25.2px;font-weight:400;font-style:normal;color:#5e6369;letter-spacing:0.17px;">Московская акционерная страховая компания</div>
<div class="t" style="left:635.7px;top:52.8px;font-size:24.4px;font-weight:400;font-style:normal;color:#5e6369;letter-spacing:0.30px;">15.00</div>
<div class="t" style="left:1051.2px;top:52.8px;font-size:24.4px;font-weight:400;font-style:normal;color:#5e6369;letter-spacing:0.17px;">0.00</div>
<div class="t" style="left:1467.2px;top:52.8px;font-size:24.4px;font-weight:400;font-style:normal;color:#5e6369;letter-spacing:0.17px;">0.00</div>
<div class="r" style="left:0.0px;top:92.5px;width:1876.0px;height:2.0px;background:#e2e5ea;"></div>
<div class="r" style="left:622.0px;top:93.5px;width:2.0px;height:60.0px;background:#e2e5ea;"></div>
<div class="r" style="left:1038.0px;top:93.5px;width:2.0px;height:60.0px;background:#e2e5ea;"></div>
<div class="r" style="left:1454.0px;top:93.5px;width:2.0px;height:60.0px;background:#e2e5ea;"></div>
<div class="t" style="left:40.7px;top:112.7px;font-size:25.2px;font-weight:400;font-style:normal;color:#5e6369;letter-spacing:0.04px;">Страховое открытое акционерное общество В...</div>
<div class="t" style="left:635.7px;top:112.8px;font-size:24.4px;font-weight:400;font-style:normal;color:#5e6369;letter-spacing:0.30px;">15.00</div>
<div class="t" style="left:1051.2px;top:112.8px;font-size:24.4px;font-weight:400;font-style:normal;color:#5e6369;letter-spacing:0.17px;">0.00</div>
<div class="t" style="left:1467.2px;top:112.8px;font-size:24.4px;font-weight:400;font-style:normal;color:#5e6369;letter-spacing:0.17px;">0.00</div>
<div class="r" style="left:0.0px;top:152.5px;width:1876.0px;height:2.0px;background:#e2e5ea;"></div>
<div class="r" style="left:622.0px;top:153.5px;width:2.0px;height:60.0px;background:#e2e5ea;"></div>
<div class="r" style="left:1038.0px;top:153.5px;width:2.0px;height:60.0px;background:#e2e5ea;"></div>
<div class="r" style="left:1454.0px;top:153.5px;width:2.0px;height:60.0px;background:#e2e5ea;"></div>
<svg class="r" style="left:14.5px;top:176.0px" width="13" height="18" viewBox="0 0 13 18"><path d="M0.5 0.5 L12.5 9 L0.5 17.5 Z" fill="#5a5f66"/></svg>
<div class="t" style="left:40.7px;top:172.7px;font-size:25.2px;font-weight:400;font-style:normal;color:#5e6369;letter-spacing:0.04px;">Страховое открытое акционерное общество В...</div>
<div class="t" style="left:635.7px;top:172.8px;font-size:24.4px;font-weight:400;font-style:normal;color:#5e6369;letter-spacing:0.15px;">10.00</div>
<div class="t" style="left:1051.7px;top:172.8px;font-size:24.4px;font-weight:400;font-style:normal;color:#5e6369;letter-spacing:-0.04px;">100.00</div>
<div class="t" style="left:1467.7px;top:172.8px;font-size:24.4px;font-weight:400;font-style:normal;color:#5e6369;letter-spacing:0.15px;">10.00</div>
<div class="r" style="left:0.0px;top:212.5px;width:1876.0px;height:2.0px;background:#e2e5ea;"></div>
<div class="r" style="left:622.0px;top:213.5px;width:2.0px;height:60.0px;background:#e2e5ea;"></div>
<div class="r" style="left:1038.0px;top:213.5px;width:2.0px;height:60.0px;background:#e2e5ea;"></div>
<div class="r" style="left:1454.0px;top:213.5px;width:2.0px;height:60.0px;background:#e2e5ea;"></div>
<svg class="r" style="left:14.5px;top:236.0px" width="13" height="18" viewBox="0 0 13 18"><path d="M0.5 0.5 L12.5 9 L0.5 17.5 Z" fill="#5a5f66"/></svg>
<div class="t" style="left:39.7px;top:232.7px;font-size:25.2px;font-weight:400;font-style:normal;color:#5e6369;letter-spacing:-0.03px;">Росгосстрах, Московская акционерная страхов...</div>
<div class="t" style="left:635.7px;top:232.8px;font-size:24.4px;font-weight:400;font-style:normal;color:#5e6369;letter-spacing:0.15px;">10.00</div>
<div class="t" style="left:1051.2px;top:232.8px;font-size:24.4px;font-weight:400;font-style:normal;color:#5e6369;letter-spacing:0.05px;">66.67</div>
<div class="t" style="left:1468.2px;top:232.8px;font-size:24.4px;font-weight:400;font-style:normal;color:#5e6369;letter-spacing:0.07px;">4.44</div>
<div class="r" style="left:0.0px;top:272.5px;width:1876.0px;height:2.0px;background:#e2e5ea;"></div>
<div class="r" style="left:0.0px;top:274.5px;width:1876.0px;height:59.0px;background:#e3f5fa;"></div>
<div class="r" style="left:622.0px;top:273.5px;width:2.0px;height:60.0px;background:#e2e5ea;"></div>
<div class="r" style="left:1038.0px;top:273.5px;width:2.0px;height:60.0px;background:#e2e5ea;"></div>
<div class="r" style="left:1454.0px;top:273.5px;width:2.0px;height:60.0px;background:#e2e5ea;"></div>
<svg class="r" style="left:11.700000000000045px;top:298.5px" width="18" height="13" viewBox="0 0 18 13"><path d="M0 0.5 H17.5 L8.75 12.5 Z" fill="#5b6fc6"/></svg>
<div class="t" style="left:39.7px;top:292.7px;font-size:25.2px;font-weight:400;font-style:normal;color:#5e6369;letter-spacing:-0.15px;">Росгосстрах, Первая страховая компания <svg width="26" height="12" viewBox="0 0 26 12" style="display:inline-block;vertical-align:3px"><path d="M3.5 6 H18" stroke="currentColor" stroke-width="2.3"/><path d="M15.5 0.8 L22.5 6 L15.5 11.2 Z" fill="currentColor"/></svg> М...</div>
<div class="t" style="left:635.7px;top:292.8px;font-size:24.4px;font-weight:400;font-style:normal;color:#5e6369;letter-spacing:0.15px;">10.00</div>
<div class="t" style="left:1051.7px;top:292.8px;font-size:24.4px;font-weight:400;font-style:normal;color:#5e6369;letter-spacing:-0.04px;">100.00</div>
<div class="t" style="left:1467.2px;top:292.8px;font-size:24.4px;font-weight:400;font-style:normal;color:#5e6369;letter-spacing:0.33px;">6.67</div>
<div class="r" style="left:0.0px;top:332.5px;width:1876.0px;height:2.0px;background:#e2e5ea;"></div>
<div class="r" style="left:0.0px;top:333.5px;width:1876.0px;height:60.0px;background:#e3f5fa;"></div>
<div class="r" style="left:622.0px;top:333.5px;width:2.0px;height:60.0px;background:#e2e5ea;"></div>
<div class="r" style="left:1038.0px;top:333.5px;width:2.0px;height:60.0px;background:#e2e5ea;"></div>
<div class="r" style="left:1454.0px;top:333.5px;width:2.0px;height:60.0px;background:#e2e5ea;"></div>
<div class="t" style="left:92.0px;top:352.7px;font-size:25.2px;font-weight:400;font-style:normal;color:#5e6369;letter-spacing:-0.15px;">Первая страховая компания <svg width="26" height="12" viewBox="0 0 26 12" style="display:inline-block;vertical-align:3px"><path d="M3.5 6 H18" stroke="currentColor" stroke-width="2.3"/><path d="M15.5 0.8 L22.5 6 L15.5 11.2 Z" fill="currentColor"/></svg> Росгосстра...</div>
<div class="t" style="left:635.7px;top:352.8px;font-size:24.4px;font-weight:400;font-style:normal;color:#5e6369;letter-spacing:0.15px;">10.00</div>
<div class="t" style="left:1051.7px;top:352.8px;font-size:24.4px;font-weight:400;font-style:normal;color:#5e6369;letter-spacing:-0.04px;">100.00</div>
<div class="t" style="left:1467.2px;top:352.8px;font-size:24.4px;font-weight:400;font-style:normal;color:#5e6369;letter-spacing:0.33px;">6.67</div>
<div class="r" style="left:0.0px;top:392.5px;width:1876.0px;height:2.0px;background:#e2e5ea;"></div>
<div class="r" style="left:0.0px;top:393.5px;width:1876.0px;height:60.0px;background:#e3f5fa;"></div>
<div class="r" style="left:622.0px;top:393.5px;width:2.0px;height:60.0px;background:#e2e5ea;"></div>
<div class="r" style="left:1038.0px;top:393.5px;width:2.0px;height:60.0px;background:#e2e5ea;"></div>
<div class="r" style="left:1454.0px;top:393.5px;width:2.0px;height:60.0px;background:#e2e5ea;"></div>
<div class="t" style="left:92.0px;top:412.7px;font-size:25.2px;font-weight:400;font-style:normal;color:#5e6369;letter-spacing:0.13px;">Московская акционерная страховая комп...</div>
<div class="t" style="left:635.7px;top:412.8px;font-size:24.4px;font-weight:400;font-style:normal;color:#5e6369;letter-spacing:0.15px;">10.00</div>
<div class="t" style="left:1051.2px;top:412.8px;font-size:24.4px;font-weight:400;font-style:normal;color:#5e6369;letter-spacing:0.05px;">66.67</div>
<div class="t" style="left:1467.2px;top:412.8px;font-size:24.4px;font-weight:400;font-style:normal;color:#5e6369;letter-spacing:0.33px;">6.67</div>
<div class="r" style="left:0.0px;top:452.5px;width:1876.0px;height:2.0px;background:#e2e5ea;"></div>
<div class="r" style="left:0.0px;top:453.5px;width:1876.0px;height:60.0px;background:#e3f5fa;"></div>
<div class="r" style="left:622.0px;top:453.5px;width:2.0px;height:60.0px;background:#e2e5ea;"></div>
<div class="r" style="left:1038.0px;top:453.5px;width:2.0px;height:60.0px;background:#e2e5ea;"></div>
<div class="r" style="left:1454.0px;top:453.5px;width:2.0px;height:60.0px;background:#e2e5ea;"></div>
<div class="t" style="left:92.0px;top:472.7px;font-size:25.2px;font-weight:400;font-style:normal;color:#5e6369;letter-spacing:-0.04px;">Росгосстрах, Московская акционерная стр...</div>
<div class="t" style="left:635.7px;top:472.8px;font-size:24.4px;font-weight:400;font-style:normal;color:#5e6369;letter-spacing:0.15px;">10.00</div>
<div class="t" style="left:1051.2px;top:472.8px;font-size:24.4px;font-weight:400;font-style:normal;color:#5e6369;letter-spacing:0.05px;">66.67</div>
<div class="t" style="left:1467.2px;top:472.8px;font-size:24.4px;font-weight:400;font-style:normal;color:#5e6369;letter-spacing:0.33px;">6.67</div>
<div class="r" style="left:0.0px;top:512.5px;width:1876.0px;height:2.0px;background:#e2e5ea;"></div>
<div class="r" style="left:0.0px;top:513.5px;width:1876.0px;height:60.0px;background:#e3f5fa;"></div>
<div class="r" style="left:622.0px;top:513.5px;width:2.0px;height:60.0px;background:#e2e5ea;"></div>
<div class="r" style="left:1038.0px;top:513.5px;width:2.0px;height:60.0px;background:#e2e5ea;"></div>
<div class="r" style="left:1454.0px;top:513.5px;width:2.0px;height:60.0px;background:#e2e5ea;"></div>
<div class="t" style="left:92.0px;top:532.7px;font-size:25.2px;font-weight:400;font-style:normal;color:#5e6369;letter-spacing:-0.04px;">Первая страховая компания, Московская ...</div>
<div class="t" style="left:635.7px;top:532.8px;font-size:24.4px;font-weight:400;font-style:normal;color:#5e6369;letter-spacing:0.15px;">10.00</div>
<div class="t" style="left:1051.7px;top:532.8px;font-size:24.4px;font-weight:400;font-style:normal;color:#5e6369;letter-spacing:-0.04px;">100.00</div>
<div class="t" style="left:1468.2px;top:532.8px;font-size:24.4px;font-weight:400;font-style:normal;color:#5e6369;letter-spacing:0.00px;">4.00</div>
<div class="r" style="left:0.0px;top:572.5px;width:1876.0px;height:2.0px;background:#e2e5ea;"></div>
<div class="r" style="left:622.0px;top:573.5px;width:2.0px;height:60.0px;background:#e2e5ea;"></div>
<div class="r" style="left:1038.0px;top:573.5px;width:2.0px;height:60.0px;background:#e2e5ea;"></div>
<div class="r" style="left:1454.0px;top:573.5px;width:2.0px;height:60.0px;background:#e2e5ea;"></div>
<svg class="r" style="left:14.5px;top:596.0px" width="13" height="18" viewBox="0 0 13 18"><path d="M0.5 0.5 L12.5 9 L0.5 17.5 Z" fill="#5a5f66"/></svg>
<div class="t" style="left:40.7px;top:592.7px;font-size:25.2px;font-weight:400;font-style:normal;color:#5e6369;letter-spacing:0.15px;">Общество с ограниченной ответственностью ...</div>
<div class="t" style="left:635.7px;top:592.8px;font-size:24.4px;font-weight:400;font-style:normal;color:#5e6369;letter-spacing:0.15px;">10.00</div>
<div class="t" style="left:1051.7px;top:592.8px;font-size:24.4px;font-weight:400;font-style:normal;color:#5e6369;letter-spacing:-0.04px;">100.00</div>
<div class="t" style="left:1467.7px;top:592.8px;font-size:24.4px;font-weight:400;font-style:normal;color:#5e6369;letter-spacing:0.15px;">10.00</div>
<div class="r" style="left:0.0px;top:632.5px;width:1876.0px;height:2.0px;background:#e2e5ea;"></div>
<div class="r" style="left:622.0px;top:633.5px;width:2.0px;height:60.0px;background:#e2e5ea;"></div>
<div class="r" style="left:1038.0px;top:633.5px;width:2.0px;height:60.0px;background:#e2e5ea;"></div>
<div class="r" style="left:1454.0px;top:633.5px;width:2.0px;height:60.0px;background:#e2e5ea;"></div>
<div class="r" style="left:0.0px;top:274.5px;width:1876.0px;height:2.0px;background:#1cb0d9;"></div>
<div class="r" style="left:0.0px;top:332.5px;width:1876.0px;height:2.0px;background:#1cb0d9;"></div>
<div class="r" style="left:0.0px;top:392.5px;width:1876.0px;height:2.0px;background:#1cb0d9;"></div>
<div class="r" style="left:0.0px;top:452.5px;width:1876.0px;height:2.0px;background:#1cb0d9;"></div>
<div class="r" style="left:0.0px;top:512.5px;width:1876.0px;height:2.0px;background:#1cb0d9;"></div>
<div class="r" style="left:0.0px;top:572.5px;width:1876.0px;height:2.0px;background:#1cb0d9;"></div>
<div class="r" style="left:0.0px;top:274.5px;width:2.0px;height:300.0px;background:#1cb0d9;"></div>
<div class="r" style="left:1873.5px;top:274.5px;width:2.0px;height:300.0px;background:#1cb0d9;"></div>
<div class="r" style="left:1865.5px;top:96.5px;width:8.5px;height:245.0px;background:#c8ccd2;"></div>
</div>
<svg class="r" style="left:1897px;top:311.5px;" width="24" height="36" viewBox="0 0 24 36"><path d="M1.5 1.5 V29.5 L7.8 23.8 L12 33.2 L16.3 31.3 L12.2 22.3 H20.3 Z" fill="#000" stroke="#fff" stroke-width="2" stroke-linejoin="miter" style="filter:drop-shadow(0 1.5px 1.5px rgba(0,0,0,0.35))"/></svg>
</body></html>
